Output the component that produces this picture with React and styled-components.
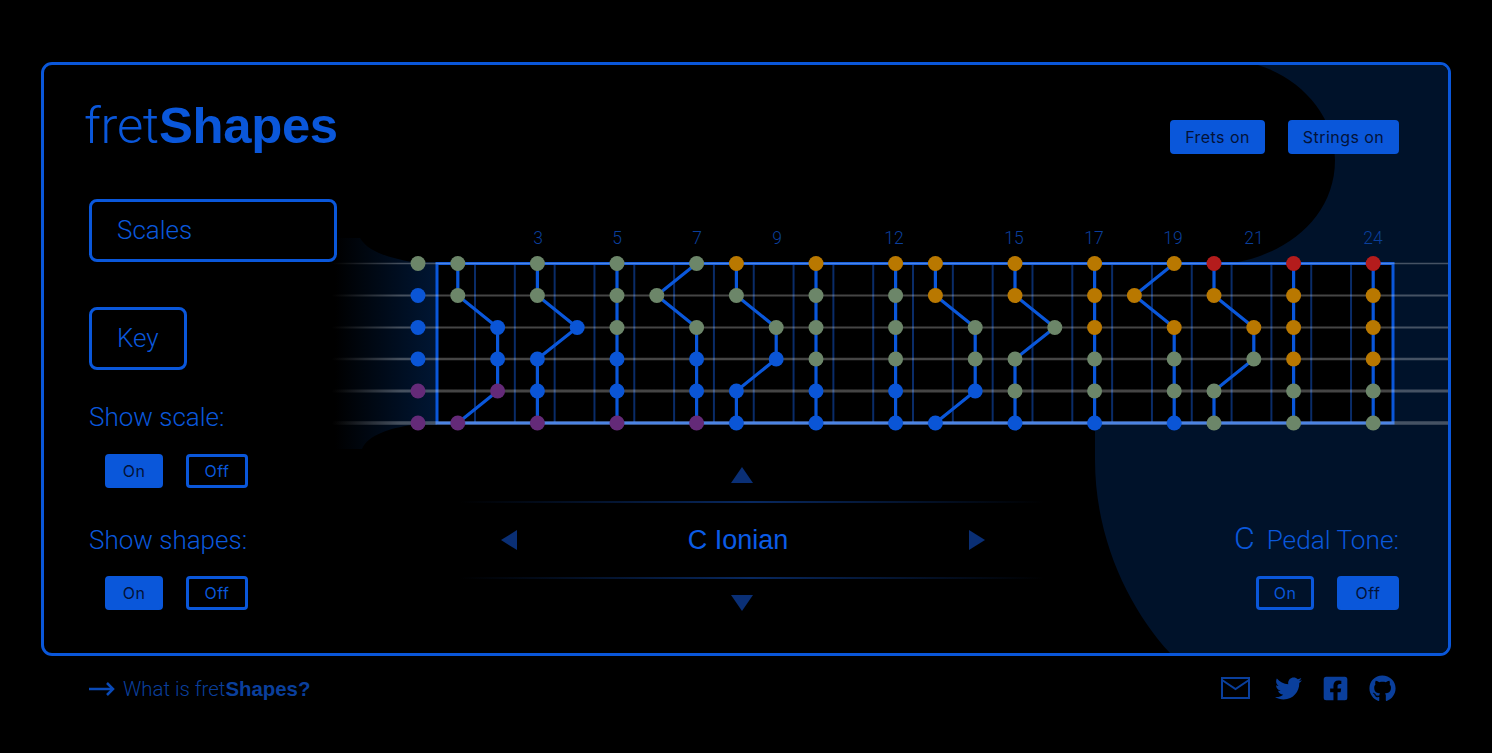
import React from 'react'
import styled, { createGlobalStyle } from 'styled-components'
import { FaTwitter, FaFacebookSquare, FaGithub } from 'react-icons/fa'

const BLUE = '#0a57da'
const DIM = '#0a3f9c'
const LIGHT = '"Roboto", "Liberation Sans", sans-serif'

const GlobalStyle = createGlobalStyle`
  html, body {
    margin: 0;
    background: #000;
    height: 100%;
  }
  body {
    font-family: "Liberation Sans", sans-serif;
    overflow: hidden;
  }
`

const Page = styled.div`
  width: 1492px;
  height: 753px;
  padding: 62px 41px 0;
  box-sizing: border-box;
  background: #000;
`

const Card = styled.main`
  position: relative;
  box-sizing: border-box;
  height: 594px;
  border: 3px solid ${BLUE};
  border-radius: 11px;
  overflow: hidden;
`

const Backdrop = styled.svg`
  position: absolute;
  top: 0;
  left: 0;
  width: 1404px;
  height: 588px;
`

const Layout = styled.div`
  position: relative;
  display: grid;
  grid-template-columns: 293px 1fr;
  height: 100%;
`

const Sidebar = styled.aside`
  padding: 32px 0 0 45px;
  position: relative;
  z-index: 1;
`

const Logo = styled.h1`
  margin: 0 0 0 -5px;
  font-size: 50.8px;
  line-height: 58px;
  font-weight: 300;
  font-family: ${LIGHT};
  letter-spacing: -0.3px;
  color: ${BLUE};
  white-space: nowrap;
  b {
    font-family: "Liberation Sans", sans-serif;
    font-weight: 700;
  }
`

const SelectBox = styled.div`
  box-sizing: border-box;
  height: 63px;
  width: ${p => p.$width}px;
  margin-top: ${p => p.$top}px;
  padding: 0 0 2px 25px;
  display: flex;
  align-items: center;
  border: 3px solid ${BLUE};
  border-radius: 8px;
  font: 300 26px/30px ${LIGHT};
  color: ${BLUE};
`

const Label = styled.div`
  font: 300 26px/30px ${LIGHT};
  color: ${BLUE};
  margin-top: ${p => p.$top}px;
  margin-bottom: ${p => p.$bottom || 22}px;
  white-space: nowrap;
`

const ToggleRow = styled.div`
  display: flex;
  gap: 23px;
  padding-left: ${p => p.$indent || 0}px;
`

const Toggle = styled.button`
  box-sizing: border-box;
  width: ${p => p.$w}px;
  height: 34px;
  padding: 0;
  border: 3px solid ${BLUE};
  border-radius: 4px;
  background: ${p => (p.$on ? BLUE : 'transparent')};
  color: ${p => (p.$on ? '#031238' : BLUE)};
  font: 400 16px/28px "Inter", sans-serif;
  letter-spacing: 0.45px;
`

const Main = styled.section`
  display: flex;
  flex-direction: column;
  min-width: 0;
`

const TopBar = styled.div`
  display: flex;
  justify-content: flex-end;
  height: 34px;
  padding: 55px 49px 0 0;
  gap: 23px;
`

const BoardWrap = styled.div`
  margin: 72px 0 0 -7px;
  height: 226px;
`

const Board = styled.svg`
  display: block;
  width: 1118px;
  height: 226px;
  text {
    font: 300 17.5px ${LIGHT};
    fill: #0a3f9c;
    text-anchor: middle;
  }
`

const BottomRow = styled.div`
  display: flex;
  justify-content: space-between;
  padding-right: 49px;
`

const Picker = styled.div`
  width: 584px;
  margin: 15px 0 0 113px;
  display: flex;
  flex-direction: column;
  align-items: center;
`

const Triangle = styled.span`
  width: 0;
  height: 0;
  border-style: solid;
  border-color: transparent;
  ${p => p.$dir === 'up' && `border-width: 0 11px 16px; border-bottom-color: #0a2f75;`}
  ${p => p.$dir === 'down' && `border-width: 16px 11px 0; border-top-color: #0a2f75;`}
  ${p => p.$dir === 'left' && `border-width: 10px 16px 10px 0; border-right-color: #0a2f75;`}
  ${p => p.$dir === 'right' && `border-width: 10px 0 10px 16px; border-left-color: #0a2f75;`}
`

const Divider = styled.div`
  align-self: stretch;
  height: 2px;
  margin: ${p => p.$margin};
  background: linear-gradient(to right, transparent, #08285f 50%, transparent);
`

const PickerRow = styled.div`
  align-self: stretch;
  display: flex;
  justify-content: space-between;
  align-items: center;
  height: 74px;
  padding: 0 49px 0 51px;
`

const ScaleName = styled.div`
  font: 400 27px/32px "Liberation Sans", sans-serif;
  color: #0b5ce6;
  padding-right: 10px;
`

const Pedal = styled.div`
  margin-top: 71px;
  display: flex;
  flex-direction: column;
  align-items: flex-end;
`

const PedalLabel = styled.div`
  display: flex;
  align-items: baseline;
  gap: 12px;
  margin-bottom: 21px;
  font: 300 26.2px/30px ${LIGHT};
  color: ${BLUE};
  span {
    font-size: 32px;
  }
`

const Footer = styled.footer`
  display: flex;
  justify-content: space-between;
  align-items: center;
  height: 32px;
  margin-top: 16px;
  padding: 0 55px 0 48px;
`

const About = styled.a`
  display: flex;
  align-items: center;
  gap: 8px;
  margin-top: 2px;
  font: 300 20.4px/24px ${LIGHT};
  color: ${DIM};
  b {
    font-family: "Liberation Sans", sans-serif;
    font-weight: 700;
  }
`

const Social = styled.nav`
  display: flex;
  align-items: center;
  gap: 20px;
  color: ${DIM};
`

const Mail = styled.svg`
  margin-right: 5px;
`

const STRINGS = [263.5, 295.5, 327.5, 359, 391, 423]
const STRING_WIDTHS = [1.5, 2, 2, 2.5, 3, 3.5]
const STEP = 39.8
const fretX = n => 418 + STEP * n
const FRET_LINES = Array.from({ length: 23 }, (_, i) => 475 + 39.82 * i)
const NUMBERS = [[3, 538], [5, 617], [7, 697], [9, 777], [12, 894], [15, 1014], [17, 1094], [19, 1173], [21, 1254], [24, 1373]]

const COLORS = { g: '#6c8669', b: '#0a55d6', p: '#642a78', o: '#b97800', r: '#b41c1c' }

// each shape: fret and note colour per string, top string first
const SHAPES = [
  [[1, 'g'], [1, 'g'], [2, 'b'], [2, 'b'], [2, 'p'], [1, 'p']],
  [[3, 'g'], [3, 'g'], [4, 'b'], [3, 'b'], [3, 'b'], [3, 'p']],
  [[5, 'g'], [5, 'g'], [5, 'g'], [5, 'b'], [5, 'b'], [5, 'p']],
  [[7, 'g'], [6, 'g'], [7, 'g'], [7, 'b'], [7, 'b'], [7, 'p']],
  [[8, 'o'], [8, 'g'], [9, 'g'], [9, 'b'], [8, 'b'], [8, 'b']],
  [[10, 'o'], [10, 'g'], [10, 'g'], [10, 'g'], [10, 'b'], [10, 'b']],
  [[12, 'o'], [12, 'g'], [12, 'g'], [12, 'g'], [12, 'b'], [12, 'b']],
  [[13, 'o'], [13, 'o'], [14, 'g'], [14, 'g'], [14, 'b'], [13, 'b']],
  [[15, 'o'], [15, 'o'], [16, 'g'], [15, 'g'], [15, 'g'], [15, 'b']],
  [[17, 'o'], [17, 'o'], [17, 'o'], [17, 'g'], [17, 'g'], [17, 'b']],
  [[19, 'o'], [18, 'o'], [19, 'o'], [19, 'g'], [19, 'g'], [19, 'b']],
  [[20, 'r'], [20, 'o'], [21, 'o'], [21, 'g'], [20, 'g'], [20, 'g']],
  [[22, 'r'], [22, 'o'], [22, 'o'], [22, 'o'], [22, 'g'], [22, 'g']],
  [[24, 'r'], [24, 'o'], [24, 'o'], [24, 'o'], [24, 'g'], [24, 'g']],
]
const OPEN = ['g', 'b', 'b', 'b', 'p', 'p']

const Fretboard = () => (
  <Board viewBox="330 226 1118 226">
    <defs>
      <linearGradient id="head" gradientUnits="userSpaceOnUse" x1="335" y1="0" x2="437" y2="0">
        <stop offset="0" stopColor="#001634" stopOpacity="0" />
        <stop offset="1" stopColor="#001634" />
      </linearGradient>
      <linearGradient id="wire" gradientUnits="userSpaceOnUse" x1="332" y1="0" x2="400" y2="0">
        <stop offset="0" stopColor="#fff" stopOpacity="0" />
        <stop offset="1" stopColor="#fff" stopOpacity="0.27" />
      </linearGradient>
    </defs>
    <path
      d="M335 238 L360 238 C368 252 390 258 412 262 L437 262 L437 425 L412 425 C390 428 368 435 362 449 L335 449 Z"
      fill="url(#head)"
    />
    <rect x="437" y="263" width="956" height="160" fill="#000" />
    {FRET_LINES.map(x => (
      <line key={x} x1={x} x2={x} y1="263" y2="423" stroke="#0a2c68" strokeWidth="2" />
    ))}
    <rect x="437" y="263.5" width="956" height="159.5" fill="none" stroke="#0a57da" strokeWidth="3" />
    {STRINGS.map((y, i) => (
      <rect key={y} x="332" y={y - STRING_WIDTHS[i] / 2} width="1116" height={STRING_WIDTHS[i]} fill="url(#wire)" />
    ))}
    {NUMBERS.map(([n, x]) => (
      <text key={n} x={x} y="244">{n}</text>
    ))}
    {SHAPES.map((shape, s) => (
      <polyline
        key={s}
        points={shape.map(([fret], i) => `${fretX(fret)},${STRINGS[i]}`).join(' ')}
        fill="none"
        stroke="#0a57da"
        strokeWidth="3.2"
      />
    ))}
    {OPEN.map((c, i) => (
      <circle key={i} cx={fretX(0)} cy={STRINGS[i]} r="7.5" fill={COLORS[c]} />
    ))}
    {SHAPES.flatMap((shape, s) =>
      shape.map(([fret, c], i) => (
        <circle key={`${s}-${i}`} cx={fretX(fret)} cy={STRINGS[i]} r="7.5" fill={COLORS[c]} />
      ))
    )}
  </Board>
)

const ArrowIcon = () => (
  <svg width="26" height="16" viewBox="0 0 26 16" fill="none" stroke="#0a4ab8" strokeWidth="2.5">
    <path d="M0 8h23" />
    <path d="M18 2l6 6-6 6" />
  </svg>
)

const MailIcon = () => (
  <Mail width="29" height="22" viewBox="0 0 29 22" fill="none" stroke={DIM} strokeWidth="2">
    <rect x="1" y="1" width="27" height="20" />
    <path d="M1 3l13.5 9L28 3" />
  </Mail>
)

const App = () => (
  <Page>
    <GlobalStyle />
    <Card>
      <Backdrop viewBox="44 65 1404 588">
        <path
          d="M1258 65 C1300 78 1335 115 1335 160 C1335 215 1290 252 1238 262 L1095 423 L1095 460 C1095 540 1130 610 1170 653 L1448 653 L1448 65 Z"
          fill="#00122a"
        />
      </Backdrop>
      <Layout>
        <Sidebar>
          <Logo>fret<b>Shapes</b></Logo>
          <SelectBox $width={248} $top={44}>Scales</SelectBox>
          <SelectBox $width={98} $top={45}>Key</SelectBox>
          <Label $top={32}>Show scale:</Label>
          <ToggleRow $indent={16}>
            <Toggle $on $w={58}>On</Toggle>
            <Toggle $w={62}>Off</Toggle>
          </ToggleRow>
          <Label $top={37} $bottom={21}>Show shapes:</Label>
          <ToggleRow $indent={16}>
            <Toggle $on $w={58}>On</Toggle>
            <Toggle $w={62}>Off</Toggle>
          </ToggleRow>
        </Sidebar>
        <Main>
          <TopBar>
            <Toggle $on $w={95}>Frets on</Toggle>
            <Toggle $on $w={111}>Strings on</Toggle>
          </TopBar>
          <BoardWrap>
            <Fretboard />
          </BoardWrap>
          <BottomRow>
            <Picker>
              <Triangle $dir="up" />
              <Divider $margin="18px -10px 0 10px" />
              <PickerRow>
                <Triangle $dir="left" />
                <ScaleName>C Ionian</ScaleName>
                <Triangle $dir="right" />
              </PickerRow>
              <Divider $margin="0 -10px 16px 10px" />
              <Triangle $dir="down" />
            </Picker>
            <Pedal>
              <PedalLabel><span>C</span>Pedal Tone:</PedalLabel>
              <ToggleRow>
                <Toggle $w={58}>On</Toggle>
                <Toggle $on $w={62}>Off</Toggle>
              </ToggleRow>
            </Pedal>
          </BottomRow>
        </Main>
      </Layout>
    </Card>
    <Footer>
      <About>
        <ArrowIcon />
        <span>What is fret<b>Shapes?</b></span>
      </About>
      <Social>
        <MailIcon />
        <FaTwitter size={27} />
        <FaFacebookSquare size={27} />
        <FaGithub size={27} />
      </Social>
    </Footer>
  </Page>
)

export default App
